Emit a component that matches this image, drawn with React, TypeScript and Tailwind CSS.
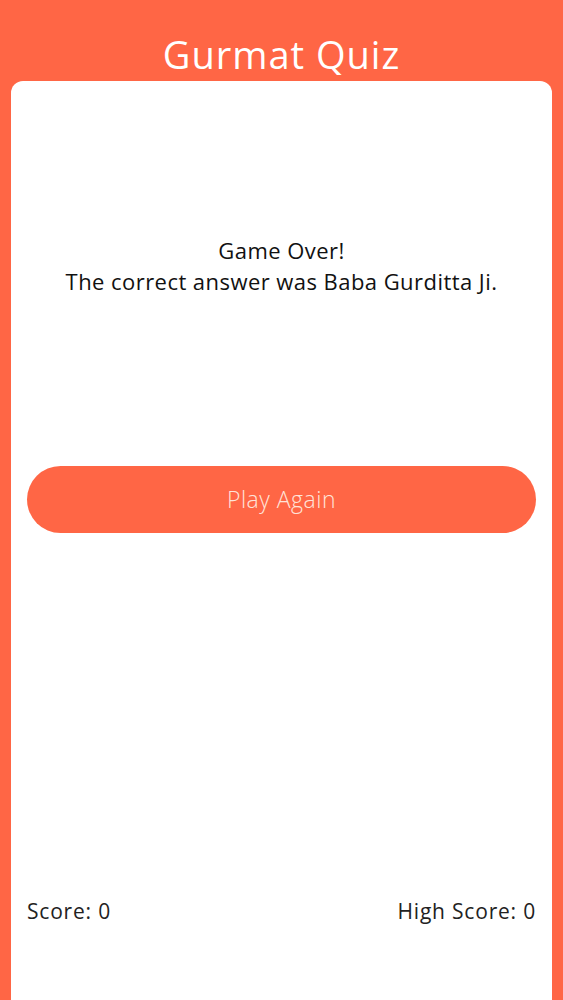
export default function App() {
  const score = 0
  const highScore = 0
  const answer = 'Baba Gurditta Ji'

  return (
    <div
      className="h-[1000px] overflow-hidden bg-[#ff6645] px-[11px]"
      style={{ fontFamily: '"Open Sans", "Noto Sans", sans-serif' }}
    >
      <header className="flex h-[81px] items-end justify-center pb-[8px]">
        <h1 className="text-[38px] leading-none tracking-[1px] text-white">Gurmat Quiz</h1>
      </header>

      <main className="flex h-[960px] flex-col rounded-t-[12px] bg-white px-4">
        <div className="mt-[154px] text-center text-[22px] leading-[31px] tracking-[0.45px] text-[#111]">
          <p>Game Over!</p>
          <p>The correct answer was {answer}.</p>
        </div>

        <button className="mt-[169px] h-[67px] w-full rounded-full bg-[#ff6645] text-[23px] font-light tracking-[0.5px] text-[#ffe3d8]">
          Play Again
        </button>

        <div className="mt-[364px] flex items-center justify-between text-[21px] leading-[28px] tracking-[0.8px] text-[#222]">
          <span>Score: {score}</span>
          <span>High Score: {highScore}</span>
        </div>
      </main>
    </div>
  )
}
